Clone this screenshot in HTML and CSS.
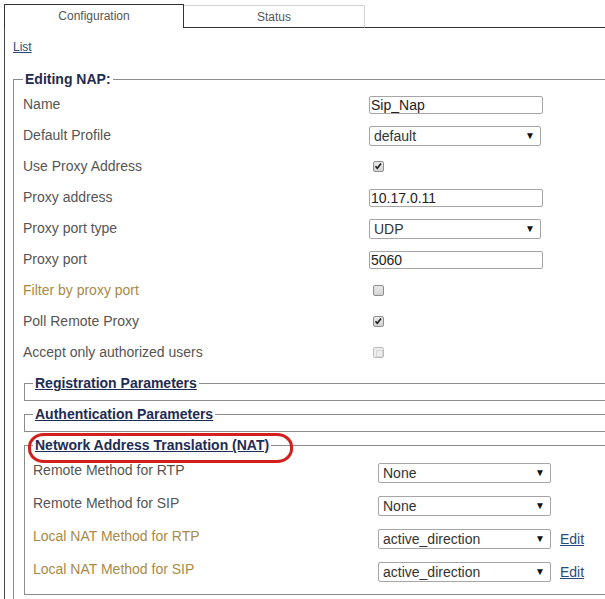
FILE: index.html
```html
<!DOCTYPE html>
<html lang="en">
<head>
    <meta charset="UTF-8">
    <title>Editing NAP</title>
    <link rel="stylesheet" href="styles.css">
</head>
<body>
<div class="page">

    <div class="tabs">
        <div class="tab tab-active">Configuration</div>
        <div class="tab">Status</div>
        <div class="tab-rest"></div>
    </div>

    <div class="panel">
        <div class="list-row"><a href="#">List</a></div>

        <fieldset class="box box-main">
            <legend class="box-title">Editing NAP:</legend>
            <div class="form-grid">
                <span class="field-label">Name</span>
                <div class="field"><input class="text-input" type="text" value="Sip_Nap"></div>

                <span class="field-label">Default Profile</span>
                <div class="field"><span class="select-wrap"><select class="select"><option>default</option></select></span></div>

                <span class="field-label">Use Proxy Address</span>
                <div class="field"><span class="check"><svg viewBox="0 0 11 11" width="9" height="9"><path d="M1.8 5.2 L4 7.6 L8.6 1.8" fill="none" stroke="#1a1a1a" stroke-width="1.9"/></svg></span></div>

                <span class="field-label">Proxy address</span>
                <div class="field"><input class="text-input" type="text" value="10.17.0.11"></div>

                <span class="field-label">Proxy port type</span>
                <div class="field"><span class="select-wrap"><select class="select"><option>UDP</option></select></span></div>

                <span class="field-label">Proxy port</span>
                <div class="field"><input class="text-input" type="text" value="5060"></div>

                <span class="field-label label-gold">Filter by proxy port</span>
                <div class="field"><span class="check"></span></div>

                <span class="field-label">Poll Remote Proxy</span>
                <div class="field"><span class="check"><svg viewBox="0 0 11 11" width="9" height="9"><path d="M1.8 5.2 L4 7.6 L8.6 1.8" fill="none" stroke="#1a1a1a" stroke-width="1.9"/></svg></span></div>

                <span class="field-label">Accept only authorized users</span>
                <div class="field"><span class="check check-off"></span></div>
            </div>

            <fieldset class="box box-sub box-first">
                <legend class="sub-title"><a href="#">Registration Parameters</a></legend>
            </fieldset>

            <fieldset class="box box-sub">
                <legend class="sub-title"><a href="#">Authentication Parameters</a></legend>
            </fieldset>

            <fieldset class="box box-sub box-nat">
                <legend class="sub-title"><a href="#">Network Address Translation (NAT)</a></legend>
                <div class="form-grid form-grid-nat">
                    <span class="field-label">Remote Method for RTP</span>
                    <div class="field"><span class="select-wrap"><select class="select select-nat"><option>None</option></select></span></div>

                    <span class="field-label">Remote Method for SIP</span>
                    <div class="field"><span class="select-wrap"><select class="select select-nat"><option>None</option></select></span></div>

                    <span class="field-label label-gold">Local NAT Method for RTP</span>
                    <div class="field"><span class="select-wrap"><select class="select select-nat"><option>active_direction</option></select></span><a href="#" class="edit-link">Edit</a></div>

                    <span class="field-label label-gold">Local NAT Method for SIP</span>
                    <div class="field"><span class="select-wrap"><select class="select select-nat"><option>active_direction</option></select></span><a href="#" class="edit-link">Edit</a></div>
                </div>
            </fieldset>
        </fieldset>
    </div>

    <div class="red-mark"></div>
</div>
</body>
</html>
```

FILE: styles.css
```css
html, body {
    margin: 0;
    padding: 0;
    overflow: hidden;
    background-color: #fff;
}
body {
    font-family: 'Liberation Sans', Arial, sans-serif;
    color: #555;
}
.page {
    position: relative;
    width: 660px;
}

/* tabs */
.tabs {
    display: flex;
    align-items: flex-end;
    padding: 4px 0 0 4px;
}
.tab {
    box-sizing: border-box;
    width: 181px;
    height: 23px;
    line-height: 22px;
    text-align: center;
    font-size: 12px;
    color: #555;
    border-top: 1px solid #d2d2d2;
    border-right: 1px solid #d2d2d2;
    border-bottom: 1px solid #333;
}
.tab-active {
    width: 180px;
    height: 24px;
    border: 1px solid #333;
    border-bottom: none;
}
.tab-rest {
    flex: 1;
    border-bottom: 1px solid #333;
}

.panel {
    margin-left: 4px;
    border-left: 1px solid #444;
    padding: 0 0 40px 8px;
}
.list-row {
    padding-top: 12px;
    font-size: 12px;
    line-height: 14px;
}
.list-row a,
.edit-link {
    color: #2b4a7a;
}

/* fieldsets */
.box {
    margin: 0;
    border: 1px solid #8c8c8c;
    min-width: 0;
}
.box-main {
    margin-top: 17px;
    padding: 2px 0 40px 9px;
}
.box-title {
    padding: 0 2px;
    font-size: 14px;
    line-height: 16px;
    font-weight: bold;
    color: #1f2c4e;
}
.box-sub {
    margin: 5px 0 0 1px;
    padding: 0 0 9px 8px;
}
.box-first {
    margin-top: 7px;
}
.box-nat {
    padding-top: 3px;
    padding-bottom: 6px;
}
.sub-title {
    padding: 0 2px;
    font-size: 14px;
    line-height: 16px;
    font-weight: bold;
}
.sub-title a {
    color: #1d2c55;
}

/* rows */
.form-grid {
    display: grid;
    grid-template-columns: 346px 1fr;
    grid-auto-rows: 31px;
    align-items: center;
}
.form-grid-nat {
    grid-template-columns: 345px 1fr;
    grid-auto-rows: 33px;
}
.field-label {
    font-size: 14px;
    line-height: 16px;
    padding-bottom: 2px;
    color: #555;
}
.form-grid-nat .field-label {
    padding-bottom: 5px;
}
.label-gold {
    color: #a98a47;
}
.field {
    display: flex;
    align-items: center;
}

/* controls */
.text-input {
    box-sizing: border-box;
    width: 174px;
    height: 18px;
    margin: 0;
    padding: 0 1px;
    border: 1px solid #a6a6a6;
    border-radius: 2px;
    font-family: 'Liberation Sans', Arial, sans-serif;
    font-size: 14px;
    color: #222;
    background: #fff;
}
.select-wrap {
    position: relative;
    display: inline-block;
}
.select-wrap::after {
    content: '\25BC';
    position: absolute;
    right: 6px;
    top: 4px;
    font-size: 10px;
    line-height: 12px;
    color: #111;
    pointer-events: none;
}
.select {
    -webkit-appearance: none;
    appearance: none;
    box-sizing: border-box;
    width: 172px;
    height: 20px;
    margin: 0;
    padding: 0 0 0 4px;
    border: 1px solid #a6a6a6;
    border-radius: 2px;
    font-family: 'Liberation Sans', Arial, sans-serif;
    font-size: 14px;
    color: #333;
    background: #fff;
}
.select-nat {
    width: 173px;
}
.edit-link {
    margin-left: 9px;
    font-size: 14px;
}

.check {
    box-sizing: border-box;
    display: inline-flex;
    align-items: center;
    justify-content: center;
    width: 11px;
    height: 11px;
    margin-left: 4px;
    border: 1px solid #8e8e8e;
    border-radius: 2px;
    background: linear-gradient(#e9e9e9, #d3d3d3);
}
.check-off {
    border-color: #bdbdbd;
    background: #ededed;
    position: relative;
}
.check-off::after {
    content: '';
    position: absolute;
    left: 2px;
    top: 2px;
    width: 5px;
    height: 5px;
    border: 1px solid #d6d6d6;
}

/* highlight drawn over the NAT legend */
.red-mark {
    position: absolute;
    left: 28px;
    top: 433px;
    box-sizing: border-box;
    width: 265px;
    height: 30px;
    border: 3px solid #d41f1f;
    border-radius: 16px / 14px;
}
```
